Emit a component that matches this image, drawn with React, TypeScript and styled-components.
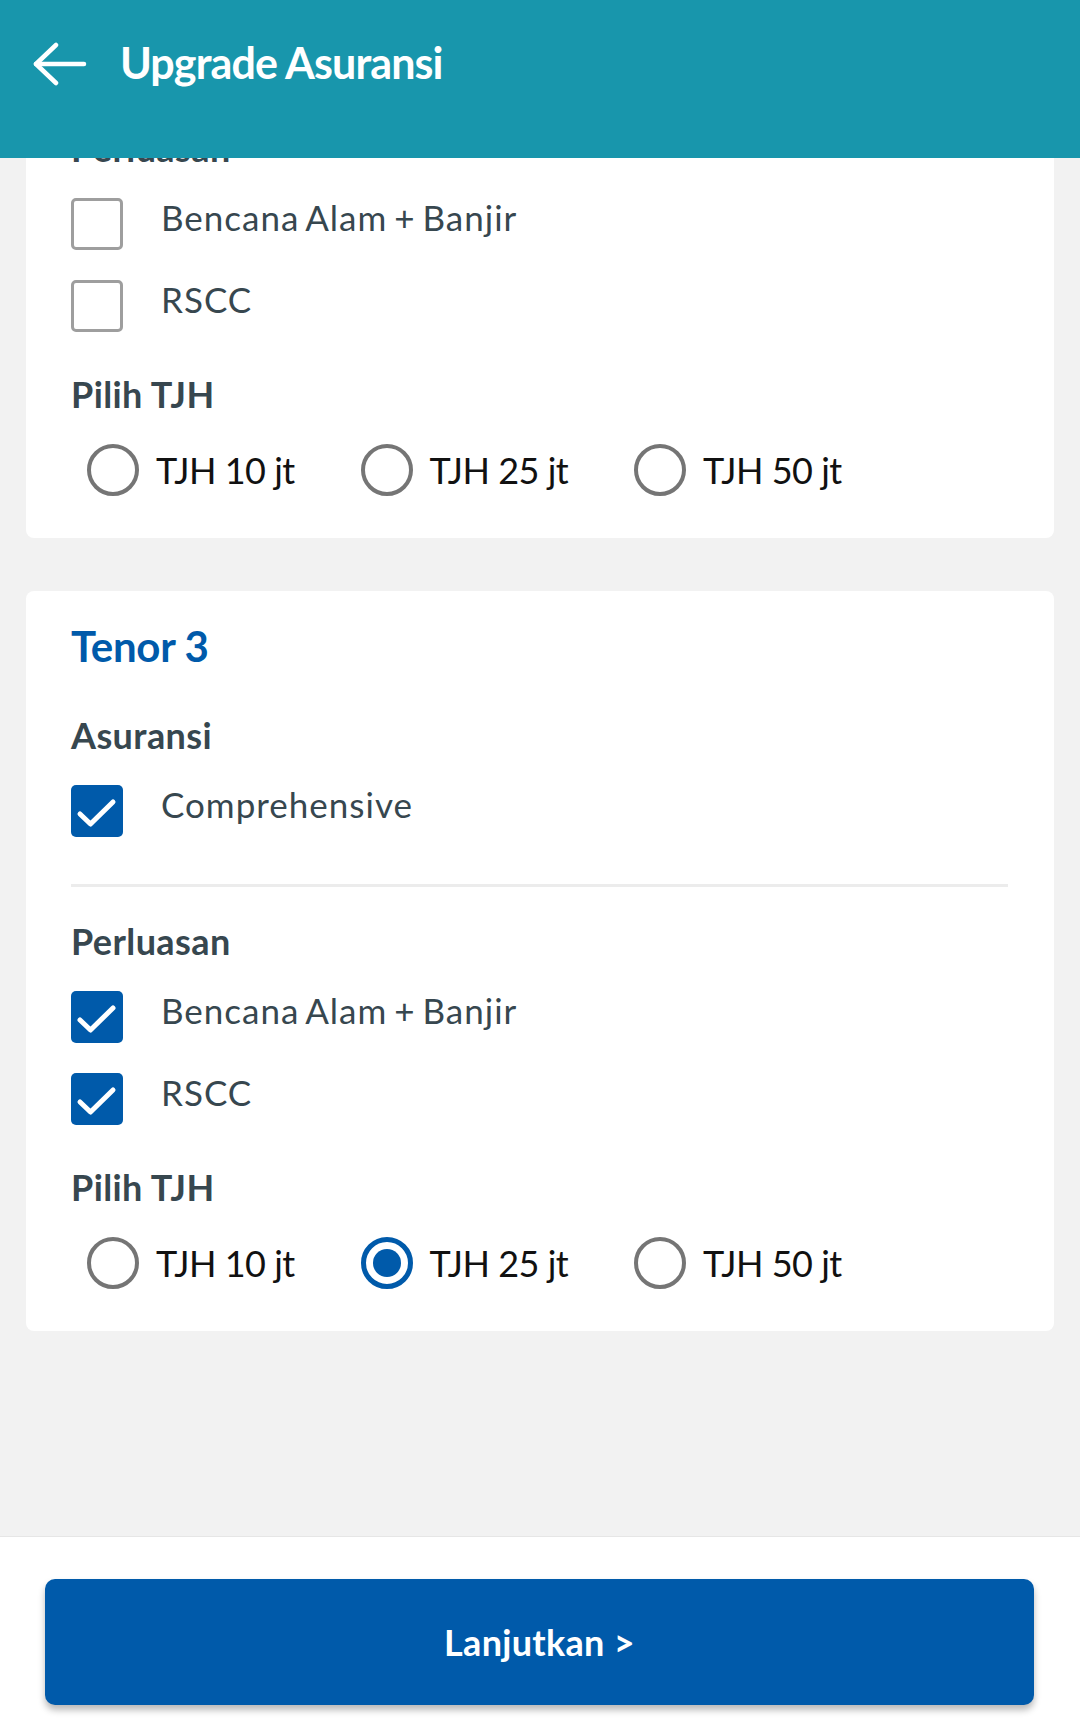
import React, { useLayoutEffect, useRef, useState } from 'react'
import styled, { createGlobalStyle } from 'styled-components'

const GlobalStyle = createGlobalStyle`
  html, body {
    margin: 0;
    padding: 0;
    background: #f2f2f2;
    font-family: Lato, "Noto Sans", sans-serif;
  }
  * {
    box-sizing: border-box;
  }
`

const BLUE = '#005aaa'
const SLATE = '#37474f'

type Tenor = {
  id: number
  asuransi: { label: string; checked: boolean }[]
  perluasan: { label: string; checked: boolean }[]
  tjh: string | null
}

const TJH_OPTIONS = ['TJH 10 jt', 'TJH 25 jt', 'TJH 50 jt']

const INITIAL: Tenor[] = [
  {
    id: 1,
    asuransi: [{ label: 'Comprehensive', checked: true }],
    perluasan: [
      { label: 'Bencana Alam + Banjir', checked: false },
      { label: 'RSCC', checked: false }
    ],
    tjh: null
  },
  {
    id: 2,
    asuransi: [{ label: 'Comprehensive', checked: true }],
    perluasan: [
      { label: 'Bencana Alam + Banjir', checked: false },
      { label: 'RSCC', checked: false }
    ],
    tjh: null
  },
  {
    id: 3,
    asuransi: [{ label: 'Comprehensive', checked: true }],
    perluasan: [
      { label: 'Bencana Alam + Banjir', checked: true },
      { label: 'RSCC', checked: true }
    ],
    tjh: 'TJH 25 jt'
  }
]

const Screen = styled.div`
  display: flex;
  flex-direction: column;
  height: 1731px;
  width: 100%;
`

const AppBar = styled.header`
  flex-shrink: 0;
  height: 158px;
  background: #1896ac;
  padding-bottom: 30px;
`

const Toolbar = styled.div`
  display: flex;
  align-items: center;
  height: 128px;
  padding-left: 32px;
`

const BackButton = styled.button`
  display: flex;
  align-items: center;
  justify-content: center;
  width: 56px;
  height: 56px;
  padding: 0;
  border: none;
  background: transparent;
  cursor: pointer;
`

const Title = styled.h1`
  margin: 0 0 4px 32px;
  font-size: 43px;
  line-height: 53px;
  letter-spacing: -0.9px;
  font-weight: 700;
  color: #ffffff;
`

const ScrollArea = styled.main`
  flex: 1;
  min-height: 0;
  overflow-y: auto;
  scrollbar-width: none;
  &::-webkit-scrollbar {
    display: none;
  }
`

const ScrollContent = styled.div`
  display: flex;
  flex-direction: column;
  gap: 53px;
  padding: 26px 26px 205px;
`

const Card = styled.section`
  background: #ffffff;
  border-radius: 8px;
  padding: 29px 46px 42px 45px;
`

const TenorTitle = styled.h2`
  margin: 0 0 41px;
  font-size: 42px;
  line-height: 53px;
  letter-spacing: -0.3px;
  font-weight: 700;
  color: ${BLUE};
`

const Section = styled.div`
  & + & {
    margin-top: 41px;
  }
`

const SectionLabel = styled.h3`
  margin: 0 0 29px;
  font-size: 36px;
  line-height: 42px;
  letter-spacing: 0.4px;
  font-weight: 700;
  color: ${SLATE};
`

const Divider = styled.hr`
  margin: 47px 0 33px;
  border: none;
  height: 3px;
  background: #ececec;
`

const CheckList = styled.div`
  display: flex;
  flex-direction: column;
  gap: 30px;
`

const CheckRow = styled.label`
  display: flex;
  align-items: flex-start;
  gap: 38px;
  cursor: pointer;
`

const Box = styled.span<{ $checked: boolean }>`
  flex-shrink: 0;
  display: flex;
  align-items: center;
  justify-content: center;
  width: 52px;
  height: 52px;
  border-radius: 5px;
  border: ${({ $checked }) => ($checked ? 'none' : '3px solid #9e9e9e')};
  background: ${({ $checked }) => ($checked ? BLUE : '#ffffff')};
`

const CheckText = styled.span`
  margin-top: -2px;
  font-size: 35px;
  line-height: 42px;
  letter-spacing: 1px;
  word-spacing: -3px;
  color: ${SLATE};
`

const RadioGroup = styled.div`
  display: grid;
  grid-template-columns: repeat(3, 273.5px);
  margin-top: 2px;
`

const RadioItem = styled.label`
  display: flex;
  align-items: center;
  gap: 17px;
  padding-left: 16px;
  cursor: pointer;
`

const RadioCircle = styled.span<{ $checked: boolean }>`
  flex-shrink: 0;
  display: flex;
  align-items: center;
  justify-content: center;
  width: 52px;
  height: 52px;
  border-radius: 50%;
  border: ${({ $checked }) => ($checked ? `5px solid ${BLUE}` : '4px solid #757575')};

  &::after {
    content: '';
    display: ${({ $checked }) => ($checked ? 'block' : 'none')};
    width: 28px;
    height: 28px;
    border-radius: 50%;
    background: ${BLUE};
  }
`

const RadioText = styled.span`
  font-size: 36px;
  line-height: 43px;
  letter-spacing: -0.5px;
  color: #111111;
`

const BottomBar = styled.footer`
  flex-shrink: 0;
  height: 195px;
  background: #ffffff;
  border-top: 1px solid #e6e6e6;
  padding: 42px 46px 0 45px;
`

const PrimaryButton = styled.button`
  width: 100%;
  height: 126px;
  border: none;
  border-radius: 10px;
  background: ${BLUE};
  color: #ffffff;
  font-family: Lato, "Noto Sans", sans-serif;
  font-size: 36px;
  letter-spacing: 0.3px;
  font-weight: 700;
  box-shadow: 0 5px 7px rgba(0, 0, 0, 0.28);
  cursor: pointer;
`

function ArrowBack() {
  return (
    <svg width="54" height="44" viewBox="0 0 54 44" fill="none">
      <path d="M3 22H51" stroke="#fff" strokeWidth="4.5" strokeLinecap="round" />
      <path d="M23 3L3 22L23 41" stroke="#fff" strokeWidth="4.5" strokeLinecap="round" strokeLinejoin="round" />
    </svg>
  )
}

function Check() {
  return (
    <svg width="52" height="52" viewBox="0 0 52 52" fill="none">
      <path d="M9 29L19.5 39L42 17" stroke="#fff" strokeWidth="5" strokeLinecap="round" strokeLinejoin="round" />
    </svg>
  )
}

function CheckItem({ label, checked, onToggle }: { label: string; checked: boolean; onToggle: () => void }) {
  return (
    <CheckRow onClick={onToggle}>
      <Box $checked={checked}>{checked && <Check />}</Box>
      <CheckText>{label}</CheckText>
    </CheckRow>
  )
}

function TenorCard({
  tenor,
  onChange
}: {
  tenor: Tenor
  onChange: (t: Tenor) => void
}) {
  const toggle = (key: 'asuransi' | 'perluasan', i: number) => {
    const list = tenor[key].map((it, idx) => (idx === i ? { ...it, checked: !it.checked } : it))
    onChange({ ...tenor, [key]: list })
  }

  return (
    <Card>
      <TenorTitle>Tenor {tenor.id}</TenorTitle>
      <Section>
        <SectionLabel>Asuransi</SectionLabel>
        <CheckList>
          {tenor.asuransi.map((it, i) => (
            <CheckItem key={it.label} label={it.label} checked={it.checked} onToggle={() => toggle('asuransi', i)} />
          ))}
        </CheckList>
      </Section>
      <Divider />
      <Section>
        <SectionLabel>Perluasan</SectionLabel>
        <CheckList>
          {tenor.perluasan.map((it, i) => (
            <CheckItem key={it.label} label={it.label} checked={it.checked} onToggle={() => toggle('perluasan', i)} />
          ))}
        </CheckList>
      </Section>
      <Section>
        <SectionLabel>Pilih TJH</SectionLabel>
        <RadioGroup>
          {TJH_OPTIONS.map((opt) => (
            <RadioItem key={opt} onClick={() => onChange({ ...tenor, tjh: opt })}>
              <RadioCircle $checked={tenor.tjh === opt} />
              <RadioText>{opt}</RadioText>
            </RadioItem>
          ))}
        </RadioGroup>
      </Section>
    </Card>
  )
}

export default function App() {
  const [tenors, setTenors] = useState<Tenor[]>(INITIAL)
  const scrollRef = useRef<HTMLElement>(null)

  // the screen is shown scrolled to the end of the list
  useLayoutEffect(() => {
    const el = scrollRef.current
    if (el) el.scrollTop = el.scrollHeight
  }, [])

  return (
    <>
      <GlobalStyle />
      <Screen>
        <AppBar>
          <Toolbar>
            <BackButton aria-label="Kembali">
              <ArrowBack />
            </BackButton>
            <Title>Upgrade Asuransi</Title>
          </Toolbar>
        </AppBar>
        <ScrollArea ref={scrollRef}>
          <ScrollContent>
            {tenors.map((t) => (
              <TenorCard
                key={t.id}
                tenor={t}
                onChange={(next) => setTenors((prev) => prev.map((p) => (p.id === next.id ? next : p)))}
              />
            ))}
          </ScrollContent>
        </ScrollArea>
        <BottomBar>
          <PrimaryButton>Lanjutkan &gt;</PrimaryButton>
        </BottomBar>
      </Screen>
    </>
  )
}
